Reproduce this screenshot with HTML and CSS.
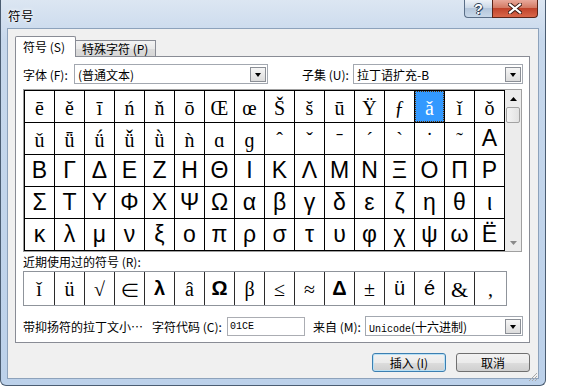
FILE: index.html
```html
<!DOCTYPE html>
<html lang="zh-CN">
<head>
  <meta charset="UTF-8" />
  <title>符号</title>
  <link rel="stylesheet" href="styles.css">
</head>
<body>

  <div class="window">
    <div class="titlebar">
      <span class="title">符号</span>
      <div class="caption">
        <div class="cap help">?</div>
        <div class="cap close">
          <svg width="14" height="11" viewBox="0 0 14 11">
            <path d="M2 1.5 L12 9.5 M12 1.5 L2 9.5" stroke="#3a1a14" stroke-width="4" stroke-linecap="square"/>
            <path d="M2 1.5 L12 9.5 M12 1.5 L2 9.5" stroke="#fff" stroke-width="2.2" stroke-linecap="square"/>
          </svg>
        </div>
      </div>
    </div>

    <div class="client">
      <div class="tabs">
        <div class="tab active">符号 (S)</div>
        <div class="tab">特殊字符 (P)</div>
      </div>

      <div class="panel">
        <div class="font-row">
          <span class="lbl lbl-font">字体 (F):</span>
          <div class="combo combo-font"><span class="combo-text">(普通文本)</span><span class="drop"></span></div>
          <span class="lbl lbl-subset">子集 (U):</span>
          <div class="combo combo-subset"><span class="combo-text">拉丁语扩充-B</span><span class="drop"></span></div>
        </div>

        <div class="charbox">
          <div class="chars">
            <span class="s">ē</span><span class="s">ě</span><span class="s">ī</span><span class="s">ń</span>
            <span class="s">ň</span><span class="s">ō</span><span class="s">Œ</span><span class="s">œ</span>
            <span class="s">Š</span><span class="s">š</span><span class="s">ū</span><span class="s">Ÿ</span>
            <span class="s">ƒ</span><span class="s sel">ǎ</span><span class="s">ǐ</span><span class="s">ǒ</span>

            <span class="s">ǔ</span><span class="s">ǖ</span><span class="s">ǘ</span><span class="s">ǚ</span>
            <span class="s">ǜ</span><span class="s">ǹ</span><span class="s">ɑ</span><span class="s">ɡ</span>
            <span class="s">ˆ</span><span class="s">ˇ</span><span class="s">ˉ</span><span class="s">ˊ</span>
            <span class="s">ˋ</span><span class="s">˙</span><span class="s">˜</span><span class="g">Α</span>

            <span class="g">Β</span><span class="g">Γ</span><span class="g">Δ</span><span class="g">Ε</span>
            <span class="g">Ζ</span><span class="g">Η</span><span class="g">Θ</span><span class="g">Ι</span>
            <span class="g">Κ</span><span class="g">Λ</span><span class="g">Μ</span><span class="g">Ν</span>
            <span class="g">Ξ</span><span class="g">Ο</span><span class="g">Π</span><span class="g">Ρ</span>

            <span class="g">Σ</span><span class="g">Τ</span><span class="g">Υ</span><span class="g">Φ</span>
            <span class="g">Χ</span><span class="g">Ψ</span><span class="g">Ω</span><span class="g">α</span>
            <span class="g">β</span><span class="g">γ</span><span class="g">δ</span><span class="g">ε</span>
            <span class="g">ζ</span><span class="g">η</span><span class="g">θ</span><span class="g">ι</span>

            <span class="g">κ</span><span class="g">λ</span><span class="g">μ</span><span class="g">ν</span>
            <span class="g">ξ</span><span class="g">ο</span><span class="g">π</span><span class="g">ρ</span>
            <span class="g">σ</span><span class="g">τ</span><span class="g">υ</span><span class="g">φ</span>
            <span class="g">χ</span><span class="g">ψ</span><span class="g">ω</span><span class="g">Ё</span>
          </div>
          <div class="vscroll">
            <div class="arrow">
              <svg width="7" height="4" viewBox="0 0 7 4"><path d="M0 4 L3.5 0 L7 4 Z" fill="#000"/></svg>
            </div>
            <div class="thumb"></div>
            <div class="track"></div>
            <div class="arrow">
              <svg width="7" height="4" viewBox="0 0 7 4"><path d="M0 0 L7 0 L3.5 4 Z" fill="#8a8a8a"/></svg>
            </div>
          </div>
        </div>

        <div class="recent-label">近期使用过的符号 (R):</div>
        <div class="recent">
          <span class="s">ǐ</span><span class="s">ü</span><span class="s">√</span><span class="s">∈</span>
          <span class="b">λ</span><span class="s">â</span><span class="b">Ω</span><span class="s">β</span>
          <span class="s">≤</span><span class="s">≈</span><span class="b">Δ</span><span class="s">±</span>
          <span class="g">ü</span><span class="g">é</span><span class="s amp">&amp;</span><span class="s">,</span>
        </div>

        <div class="info-row">
          <span class="lbl lbl-name">带抑扬符的拉丁文小…</span>
          <span class="lbl lbl-code">字符代码 (C):</span>
          <div class="field"><span class="mono">01CE</span></div>
          <span class="lbl lbl-from">来自 (M):</span>
          <div class="combo combo-from"><span class="combo-text"><span class="mono">Unicode</span>(十六进制)</span><span class="drop"></span></div>
        </div>
      </div>

      <div class="buttons">
        <div class="btn default">插入 (I)</div>
        <div class="btn">取消</div>
      </div>

      <div class="grip">
        <svg width="10" height="10" viewBox="0 0 10 10">
          <path d="M9 1 L1 9 M9 4 L4 9 M9 7 L7 9" stroke="#a9a9a9" stroke-width="1"/>
        </svg>
      </div>
    </div>
  </div>

</body>
</html>
```

FILE: styles.css
```css
body {
  margin: 0;
  background: #fff;
  font-family: "Noto Sans CJK SC", sans-serif;
  font-size: 12px;
  color: #000;
}

.window {
  width: 546px;
  height: 386px;
  box-sizing: border-box;
  border: 1px solid #4b5d72;
  border-top: none;
  border-radius: 0 0 6px 6px;
  background: linear-gradient(to bottom, #dce6f2, #c7d8ec 40px, #bcd1ea);
  padding: 0 6px 6px 6px;
  display: flex;
  flex-direction: column;
}

.titlebar {
  height: 28px;
  display: flex;
  justify-content: space-between;
  align-items: flex-start;
}

.title {
  padding: 6px 0 0 1px;
  font-size: 12.5px;
  letter-spacing: 0.5px;
  text-shadow: 0 0 4px #fff, 0 0 2px #fff;
}

.caption {
  display: flex;
  margin-right: 1px;
}

.cap {
  height: 18px;
  box-sizing: border-box;
  border: 1px solid #5a6e87;
  border-top: none;
  display: flex;
  align-items: center;
  justify-content: center;
}

.help {
  width: 28px;
  border-radius: 0 0 0 4px;
  border-right: none;
  background: linear-gradient(to bottom, #edf2f8, #ccd9e8 45%, #b4c6db 50%, #c9d8e9);
  color: #fff;
  font-family: "Liberation Sans", sans-serif;
  font-weight: bold;
  font-size: 14px;
  text-shadow: 0 0 1px #33465c, 1px 1px 0 #33465c, -1px 0 0 #33465c, 0 -1px 0 #33465c;
}

.close {
  width: 46px;
  border-radius: 0 0 4px 0;
  border-color: #5a2418;
  background: linear-gradient(to bottom, #e9a99b, #d37a64 45%, #c0432b 50%, #d9674a);
}

.client {
  flex: 1;
  position: relative;
  background: #f0f0f0;
  border: 1px solid #8da2bb;
  padding: 7px 8px 0 7px;
}

.tabs {
  display: flex;
  align-items: flex-start;
  height: 21px;
  margin-bottom: -1px;
  position: relative;
}

.tab {
  box-sizing: border-box;
  border: 1px solid #898c95;
  border-bottom: none;
  display: flex;
  align-items: center;
  padding-left: 7px;
  white-space: nowrap;
}

.tab.active {
  width: 61px;
  height: 21px;
  background: #fff;
  border-radius: 2px 2px 0 0;
  padding-bottom: 1px;
}

.tab:not(.active) {
  width: 80px;
  height: 16px;
  margin-top: 4px;
  border-left: none;
  background: linear-gradient(to bottom, #f3f3f3, #e9e9e9 50%, #dcdcdc 51%, #d6d6d6);
  padding-left: 6px;
}

.panel {
  height: 287px;
  box-sizing: border-box;
  border: 1px solid #898c95;
  background: #fff;
  padding: 7px 0 0 7px;
}

.font-row {
  display: flex;
  align-items: center;
  height: 20px;
}

.lbl {
  white-space: nowrap;
  overflow: hidden;
}

.lbl-font { width: 51px; }

.lbl-subset {
  width: 51px;
  margin-left: 34px;
}

.combo {
  height: 20px;
  box-sizing: border-box;
  border: 1px solid #a3a8b0;
  background: #fff;
  display: flex;
  align-items: center;
  justify-content: space-between;
  padding: 0 1px 0 3px;
}

.combo-font { width: 194px; }
.combo-subset { width: 170px; }

.drop {
  width: 16px;
  height: 15px;
  box-sizing: border-box;
  border: 1px solid #8b8f96;
  background: linear-gradient(to bottom, #f6f6f6, #dcdcdc);
  position: relative;
}

.drop::after {
  content: "";
  position: absolute;
  left: 4px;
  top: 5px;
  border-left: 3.5px solid transparent;
  border-right: 3.5px solid transparent;
  border-top: 4px solid #000;
}

.charbox {
  margin-top: 5px;
  width: 499px;
  box-sizing: border-box;
  border: 1px solid #a0a0a0;
  border-left-color: #9a9a9a;
  display: flex;
}

.chars {
  display: grid;
  grid-template-columns: repeat(16, 29px);
  grid-template-rows: repeat(5, 31px);
  gap: 1px;
  padding: 1px;
  background: #000;
}

.chars span,
.recent span {
  background: #fff;
  display: flex;
  align-items: center;
  justify-content: center;
}

.s {
  font-family: "Liberation Serif", serif;
  font-size: 20px;
  padding-top: 4px;
}

.g {
  font-family: "Liberation Sans", sans-serif;
  font-size: 23px;
}

.b {
  font-family: "Liberation Sans", sans-serif;
  font-weight: bold;
  font-size: 20px;
}

.chars .sel {
  background: #3399ff;
  color: #fff;
  outline: 1px dotted #5a3000;
  outline-offset: -1px;
}

.vscroll {
  width: 16px;
  display: flex;
  flex-direction: column;
  background: #ececec;
}

.arrow {
  height: 17px;
  display: flex;
  align-items: center;
  justify-content: center;
}

.thumb {
  height: 16px;
  margin: 0 1px;
  box-sizing: border-box;
  border: 1px solid #a2a2a2;
  border-radius: 2px;
  background: linear-gradient(to right, #f4f4f4, #e2e2e2);
}

.track { flex: 1; }

.recent-label {
  margin-top: 3px;
  height: 14px;
  line-height: 14px;
}

.recent {
  margin-top: 2px;
  width: 484px;
  height: 35px;
  box-sizing: border-box;
  border: 1px solid #8f949b;
  display: grid;
  grid-template-columns: 30px repeat(14, 29px) 1fr;
  gap: 1px;
  background: #2b2b2b;
}

.recent .s { padding-top: 2px; }
.recent .g { font-size: 20px; }
.recent .amp { font-size: 22px; }

.info-row {
  margin-top: 10px;
  display: flex;
  align-items: center;
  height: 20px;
}

.lbl-name { width: 129px; }
.lbl-code { width: 75px; }

.field {
  width: 78px;
  height: 19px;
  box-sizing: border-box;
  border: 1px solid #abadb3;
  background: #fff;
  display: flex;
  align-items: center;
  padding-left: 2px;
}

.mono {
  font-family: "Liberation Mono", monospace;
  font-size: 10px;
}

.lbl-from {
  width: 52px;
  margin-left: 8px;
}

.combo-from { width: 158px; }

.buttons {
  display: flex;
  justify-content: flex-end;
  gap: 10px;
  margin-top: 10px;
}

.btn {
  width: 74px;
  height: 19px;
  box-sizing: border-box;
  border: 1px solid #707070;
  border-radius: 3px;
  background: linear-gradient(to bottom, #f2f2f2, #ebebeb 50%, #dddddd 51%, #cfcfcf);
  display: flex;
  align-items: center;
  justify-content: center;
}

.btn.default {
  border-color: #3c7fb1;
  box-shadow: inset 0 0 0 1px #b8e0f5;
}

.grip {
  position: absolute;
  right: 0;
  bottom: 0;
  width: 10px;
  height: 10px;
}
```
